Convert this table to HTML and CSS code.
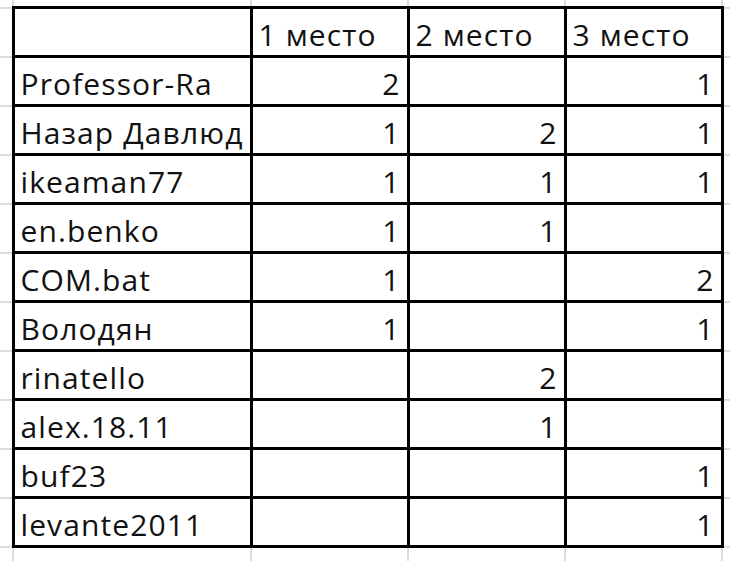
FILE: index.html
```html
<!DOCTYPE html>
<html lang="ru">
<head>
<meta charset="utf-8">
<link rel="stylesheet" href="styles.css">
</head>
<body>
<table class="sheet">
  <colgroup>
    <col class="c-margin-l">
    <col class="c-name">
    <col class="c-num">
    <col class="c-num">
    <col class="c-num">
    <col class="c-margin-r">
  </colgroup>
  <tr class="r-margin-t">
    <td class="m"></td><td class="m"></td><td class="m"></td><td class="m"></td><td class="m"></td><td class="m"></td>
  </tr>
  <tr>
    <td class="m"></td><td></td><td>1 место</td><td>2 место</td><td>3 место</td><td class="m"></td>
  </tr>
  <tr><td class="m"></td><td>Professor-Ra</td><td class="n">2</td><td class="n"></td><td class="n">1</td><td class="m"></td></tr>
  <tr><td class="m"></td><td>Назар Давлюд</td><td class="n">1</td><td class="n">2</td><td class="n">1</td><td class="m"></td></tr>
  <tr><td class="m"></td><td>ikeaman77</td><td class="n">1</td><td class="n">1</td><td class="n">1</td><td class="m"></td></tr>
  <tr><td class="m"></td><td>en.benko</td><td class="n">1</td><td class="n">1</td><td class="n"></td><td class="m"></td></tr>
  <tr><td class="m"></td><td>COM.bat</td><td class="n">1</td><td class="n"></td><td class="n">2</td><td class="m"></td></tr>
  <tr><td class="m"></td><td>Володян</td><td class="n">1</td><td class="n"></td><td class="n">1</td><td class="m"></td></tr>
  <tr><td class="m"></td><td>rinatello</td><td class="n"></td><td class="n">2</td><td class="n"></td><td class="m"></td></tr>
  <tr><td class="m"></td><td>alex.18.11</td><td class="n"></td><td class="n">1</td><td class="n"></td><td class="m"></td></tr>
  <tr><td class="m"></td><td>buf23</td><td class="n"></td><td class="n"></td><td class="n">1</td><td class="m"></td></tr>
  <tr><td class="m"></td><td>levante2011</td><td class="n"></td><td class="n"></td><td class="n">1</td><td class="m"></td></tr>
  <tr class="r-margin-b">
    <td class="m"></td><td class="m"></td><td class="m"></td><td class="m"></td><td class="m"></td><td class="m"></td>
  </tr>
</table>
</body>
</html>
```

FILE: styles.css
```css
html, body {
  margin: 0;
  padding: 0;
  background: #ffffff;
  overflow: hidden;
}

.sheet {
  border-collapse: collapse;
  table-layout: fixed;
  width: 742px;
  font-family: "Open Sans", Lato, "Noto Sans", sans-serif;
  font-size: 30px;
  letter-spacing: 1.1px;
  color: #111111;
}

.c-margin-l { width: 13px; }
.c-name { width: 238px; }
.c-num { width: 157px; }
.c-margin-r { width: 20px; }

.sheet td {
  border: 3px solid #000000;
  height: 41px;
  padding: 0 6px 5px 6px;
  vertical-align: bottom;
  white-space: nowrap;
  line-height: 1;
}

.sheet td.n {
  text-align: right;
}

.sheet td.m {
  border: 2px solid #dcdcdc;
  padding: 0;
}

.r-margin-t td {
  height: 6px;
}

.r-margin-t td.m {
  border-top: none;
}

.r-margin-b td {
  height: 20px;
}

.r-margin-b td.m {
  border-bottom: none;
}

.sheet tr > td.m:first-child {
  border-left: none;
}

.sheet tr > td.m:last-child {
  border-right: none;
}
```
